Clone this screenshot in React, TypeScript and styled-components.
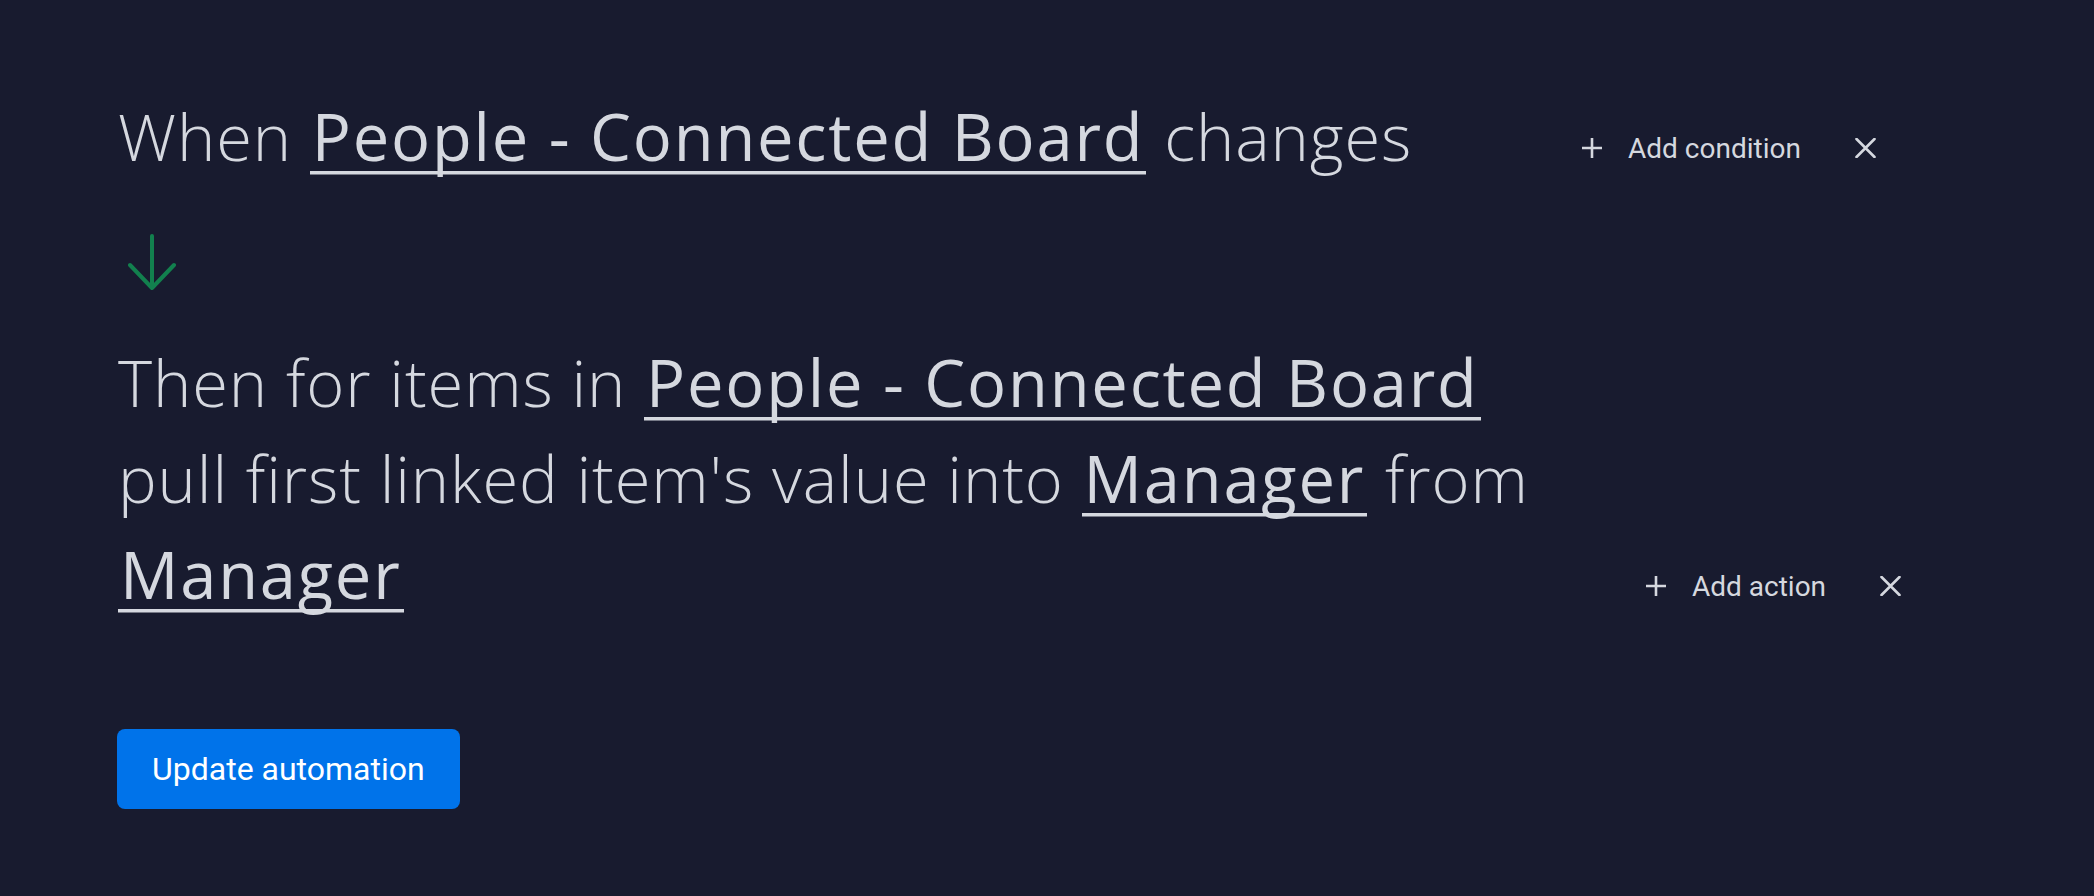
import React from "react";
import styled, { createGlobalStyle } from "styled-components";

const GlobalStyle = createGlobalStyle`
  html, body {
    margin: 0;
    padding: 0;
    background: #181b2f;
  }
  body {
    color: #d5d8df;
    font-family: "Roboto", "Liberation Sans", sans-serif;
  }
`;

const Page = styled.main`
  min-height: 896px;
  box-sizing: border-box;
  padding: 88px 0 0 118px;
  background: #181b2f;
  display: flex;
  flex-direction: column;
  align-items: flex-start;
`;

const RuleRow = styled.section`
  display: flex;
  align-items: flex-end;
`;

const Sentence = styled.p`
  flex: 0 0 1440px;
  margin: 0;
  font-family: "Open Sans", "Noto Sans", sans-serif;
  font-weight: 300;
  font-size: 65px;
  line-height: 96px;
  letter-spacing: 0.9px;
  color: #d5d8df;
`;

const Field = styled.span`
  padding: 0 2px;
  font-weight: 400;
  letter-spacing: 1.8px;
  cursor: pointer;
  background-image: linear-gradient(#d5d8df, #d5d8df);
  background-repeat: no-repeat;
  background-size: 100% 3.5px;
  background-position: 0 calc(100% - 5.5px);
`;

const Controls = styled.div<{ $offset: number }>`
  height: 72px;
  display: flex;
  align-items: center;
  margin-left: ${(p) => p.$offset}px;
`;

const AddButton = styled.button`
  display: flex;
  align-items: center;
  gap: 26px;
  padding: 0;
  border: 0;
  background: transparent;
  color: #d5d8df;
  font-family: "Roboto", "Liberation Sans", sans-serif;
  font-size: 28px;
  cursor: pointer;
`;

const CloseButton = styled.button`
  display: flex;
  align-items: center;
  margin-left: 54px;
  padding: 0;
  border: 0;
  background: transparent;
  color: #d5d8df;
  cursor: pointer;
`;

const ArrowWrap = styled.div`
  margin: 50px 0 44px 10px;
  display: flex;
`;

const PrimaryButton = styled.button`
  margin: 107px 0 0 -1px;
  height: 80px;
  padding: 0 35px;
  border: 0;
  border-radius: 8px;
  background: #0073ea;
  color: #ffffff;
  font-family: "Roboto", "Liberation Sans", sans-serif;
  font-size: 32px;
  cursor: pointer;
`;

const PlusIcon = () => (
  <svg width="20" height="20" viewBox="0 0 20 20" fill="none" aria-hidden>
    <path d="M0 10H20M10 0V20" stroke="currentColor" strokeWidth="2.6" />
  </svg>
);

const CloseIcon = () => (
  <svg width="21" height="20" viewBox="0 0 21 20" fill="none" aria-hidden>
    <path
      d="M1.5 1L19.5 19M19.5 1L1.5 19"
      stroke="currentColor"
      strokeWidth="2.6"
      strokeLinecap="round"
    />
  </svg>
);

const DownArrow = () => (
  <svg width="48" height="56" viewBox="0 0 48 56" fill="none" aria-hidden>
    <path
      d="M24 2V54M2 31L24 54L46 31"
      stroke="#12804e"
      strokeWidth="4"
      strokeLinecap="round"
      strokeLinejoin="round"
    />
  </svg>
);

type ControlProps = { label: string; offset: number };

const RuleControls = ({ label, offset }: ControlProps) => (
  <Controls $offset={offset}>
    <AddButton>
      <PlusIcon />
      {label}
    </AddButton>
    <CloseButton aria-label="Remove">
      <CloseIcon />
    </CloseButton>
  </Controls>
);

export default function App() {
  return (
    <>
      <GlobalStyle />
      <Page>
        <RuleRow>
          <Sentence>
            When <Field>People - Connected Board</Field> changes
          </Sentence>
          <RuleControls label="Add condition" offset={24} />
        </RuleRow>
        <ArrowWrap>
          <DownArrow />
        </ArrowWrap>
        <RuleRow>
          <Sentence>
            Then for items in <Field>People - Connected Board</Field> pull first linked item's value
            into <Field>Manager</Field> from <Field>Manager</Field>
          </Sentence>
          <RuleControls label="Add action" offset={88} />
        </RuleRow>
        <PrimaryButton>Update automation</PrimaryButton>
      </Page>
    </>
  );
}
